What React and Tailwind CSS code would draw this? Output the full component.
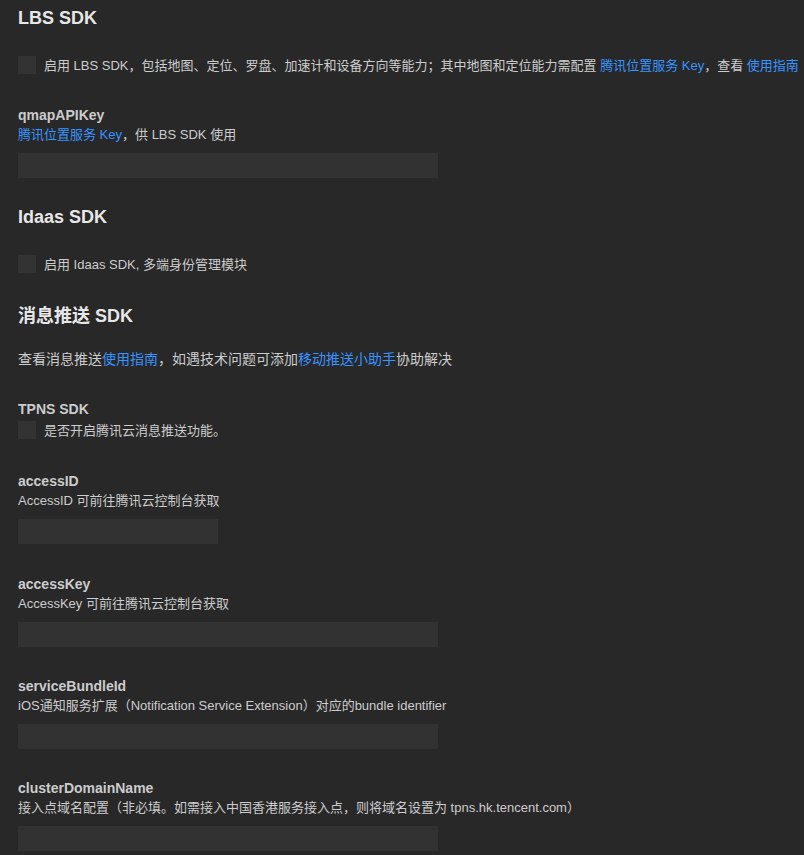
const font = { fontFamily: '"Liberation Sans", "Noto Sans CJK SC", sans-serif' };

const Link = ({ children }) => <span className="text-[#3794ff]">{children}</span>;

const Heading = ({ children, className = '' }) => (
    <h2 className={`text-[18px] leading-[24px] font-bold text-[#e7e7e7] ${className}`}>{children}</h2>
);

const Check = ({ children, className = '' }) => (
    <label className={`flex items-center gap-2 h-[18px] text-[13px] text-[#cccccc] whitespace-nowrap ${className}`}>
        <span className="w-[18px] h-[18px] bg-[#333333] shrink-0" />
        <span className="leading-[20px] pt-[2px]">{children}</span>
    </label>
);

const Field = ({ name, desc, width = 'w-[420px]', className = '' }) => (
    <div className={className}>
        <div className="text-[14px] leading-[20px] font-bold text-[#cccccc]">{name}</div>
        <div className="text-[13px] leading-[20px] text-[#cccccc] whitespace-nowrap">{desc}</div>
        <input className={`block mt-2 h-[25px] ${width} bg-[#323232] outline-none border-0`} />
    </div>
);

export default function App() {
    return (
        <div className="min-h-[855px] bg-[#282828] px-[18px] pt-[6px] overflow-hidden" style={font}>
            {/* LBS */}
            <Heading>LBS SDK</Heading>
            <Check className="mt-[26px]">
                启用 LBS SDK，包括地图、定位、罗盘、加速计和设备方向等能力；其中地图和定位能力需配置 <Link>腾讯位置服务 Key</Link>，查看 <Link>使用指南</Link>
            </Check>
            <Field
                className="mt-[31px]"
                name="qmapAPIKey"
                desc={<><Link>腾讯位置服务 Key</Link>，供 LBS SDK 使用</>}
            />

            {/* Idaas */}
            <Heading className="mt-[27px]">Idaas SDK</Heading>
            <Check className="mt-[26px]">启用 Idaas SDK, 多端身份管理模块</Check>

            {/* Push */}
            <Heading className="mt-[31px]">消息推送 SDK</Heading>
            <div className="mt-[21px] text-[14px] leading-[20px] text-[#cccccc]">
                查看消息推送<Link>使用指南</Link>，如遇技术问题可添加<Link>移动推送小助手</Link>协助解决
            </div>
            <div className="mt-[30px] text-[14px] leading-[20px] font-bold text-[#cccccc]">TPNS SDK</div>
            <Check className="mt-[2px]">是否开启腾讯云消息推送功能。</Check>

            <Field className="mt-[32px]" name="accessID" desc="AccessID 可前往腾讯云控制台获取" width="w-[200px]" />
            <Field className="mt-[30px]" name="accessKey" desc="AccessKey 可前往腾讯云控制台获取" />
            <Field
                className="mt-[29px]"
                name="serviceBundleId"
                desc="iOS通知服务扩展（Notification Service Extension）对应的bundle identifier"
            />
            <Field
                className="mt-[29px]"
                name="clusterDomainName"
                desc="接入点域名配置（非必填。如需接入中国香港服务接入点，则将域名设置为 tpns.hk.tencent.com）"
            />
        </div>
    );
}
